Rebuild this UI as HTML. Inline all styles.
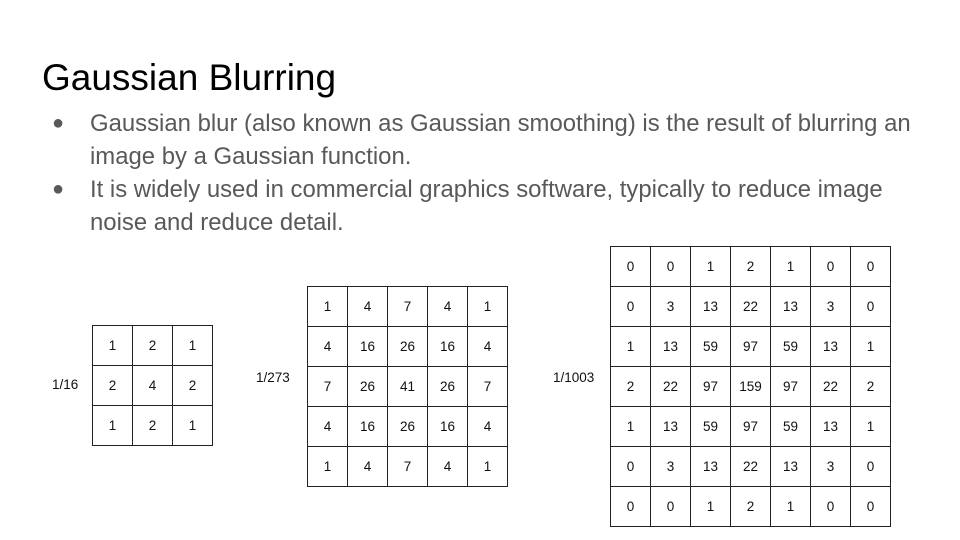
<!DOCTYPE html>
<html><head><meta charset="utf-8"><style>
body{margin:0;width:960px;height:540px;background:#fff;position:relative;overflow:hidden;font-family:"Liberation Sans",Arial,sans-serif}
.t{position:absolute;left:42px;top:57px;font-size:37px;color:#000}
.b{position:absolute;left:90px;font-size:23.9px;color:#595959;line-height:33px;width:870px;white-space:nowrap}
.d{position:absolute;left:52px;font-size:20px;color:#595959}
table{position:absolute;border-collapse:collapse}
td{border:1px solid #222;width:39px;height:39px;padding:0;text-align:center;font-size:13.5px;color:#111}
.l{position:absolute;font-size:13.5px;color:#111}
</style></head><body>
<div class="t">Gaussian Blurring</div>
<div class="d" style="top:112px">●</div>
<div class="b" style="top:107px">Gaussian blur (also known as Gaussian smoothing) is the result of blurring an<br>image by a Gaussian function.</div>
<div class="d" style="top:178px">●</div>
<div class="b" style="top:173px">It is widely used in commercial graphics software, typically to reduce image<br>noise and reduce detail.</div>

<div class="l" style="left:52px;top:377px">1/16</div>
<table style="left:92px;top:325px">
<tr><td>1</td><td>2</td><td>1</td></tr>
<tr><td>2</td><td>4</td><td>2</td></tr>
<tr><td>1</td><td>2</td><td>1</td></tr>
</table>

<div class="l" style="left:256px;top:370px">1/273</div>
<table style="left:307px;top:286px">
<tr><td>1</td><td>4</td><td>7</td><td>4</td><td>1</td></tr>
<tr><td>4</td><td>16</td><td>26</td><td>16</td><td>4</td></tr>
<tr><td>7</td><td>26</td><td>41</td><td>26</td><td>7</td></tr>
<tr><td>4</td><td>16</td><td>26</td><td>16</td><td>4</td></tr>
<tr><td>1</td><td>4</td><td>7</td><td>4</td><td>1</td></tr>
</table>

<div class="l" style="left:553px;top:370px">1/1003</div>
<table style="left:610px;top:246px">
<tr><td>0</td><td>0</td><td>1</td><td>2</td><td>1</td><td>0</td><td>0</td></tr>
<tr><td>0</td><td>3</td><td>13</td><td>22</td><td>13</td><td>3</td><td>0</td></tr>
<tr><td>1</td><td>13</td><td>59</td><td>97</td><td>59</td><td>13</td><td>1</td></tr>
<tr><td>2</td><td>22</td><td>97</td><td>159</td><td>97</td><td>22</td><td>2</td></tr>
<tr><td>1</td><td>13</td><td>59</td><td>97</td><td>59</td><td>13</td><td>1</td></tr>
<tr><td>0</td><td>3</td><td>13</td><td>22</td><td>13</td><td>3</td><td>0</td></tr>
<tr><td>0</td><td>0</td><td>1</td><td>2</td><td>1</td><td>0</td><td>0</td></tr>
</table>
</body></html>
